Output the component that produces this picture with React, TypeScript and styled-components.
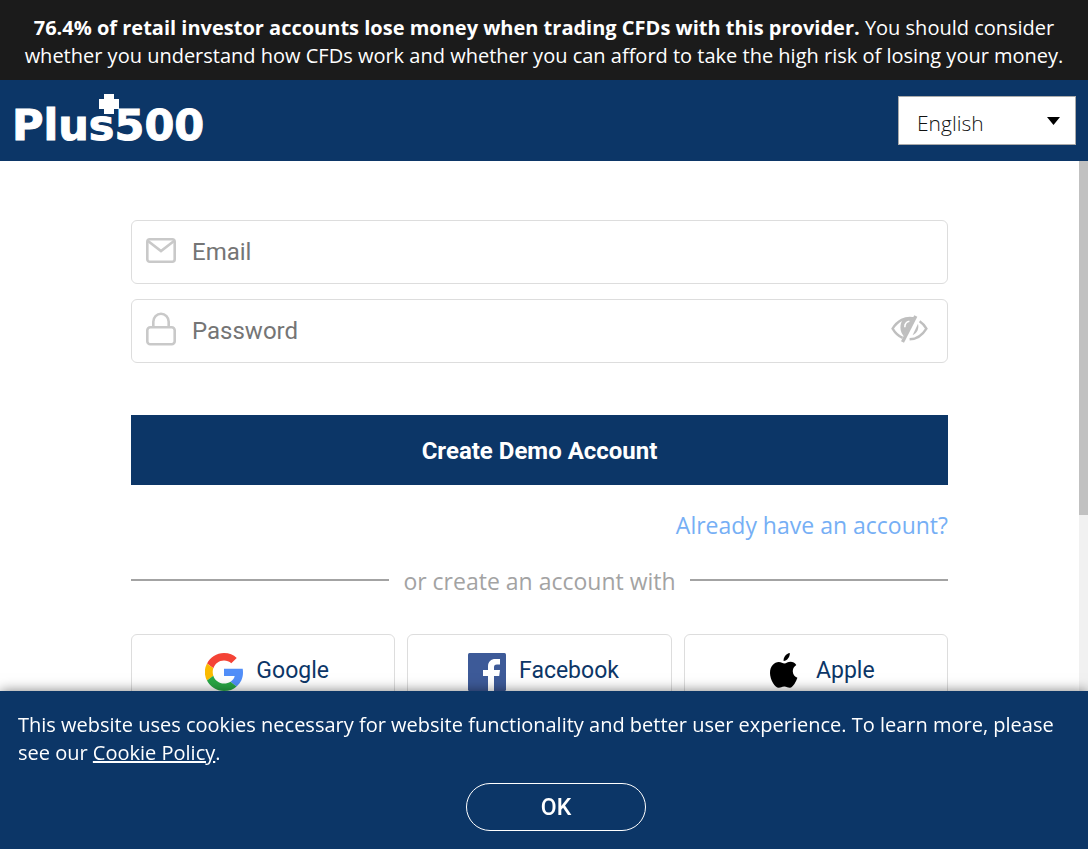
import React, { useState } from 'react';
import styled, { createGlobalStyle } from 'styled-components';

const navy = '#0c3667';
const humanist = '"Segoe UI", "Open Sans", "Noto Sans", sans-serif';
const grotesque = 'Roboto, "Liberation Sans", sans-serif';

const GlobalStyle = createGlobalStyle`
  *, *::before, *::after { box-sizing: border-box; }
  body { margin: 0; background: #fff; font-family: ${humanist}; }
  button, input, select { font: inherit; margin: 0; }
`;

const Page = styled.div`
  display: flex;
  flex-direction: column;
  height: 100vh;
  overflow: hidden;
`;

const RiskNotice = styled.p`
  margin: 0;
  padding: 14px 16px 10px;
  background: #1b1b1b;
  color: #fff;
  font-size: 20px;
  line-height: 28px;
  text-align: center;
`;

const Header = styled.header`
  display: flex;
  align-items: center;
  justify-content: space-between;
  flex: none;
  height: 81px;
  padding: 0 12px;
  background: ${navy};
`;

const Logo = styled.a`
  position: relative;
  padding-top: 8px;
  color: #fff;
  font: bold 43px/48px "DejaVu Sans", sans-serif;
  -webkit-text-stroke: 1px #fff;
  text-decoration: none;
`;

const LogoCross = styled.svg`
  position: absolute;
  left: 87px;
  top: 1px;
`;

const LanguageBox = styled.div`
  display: grid;
  align-items: center;
  width: 178px;
  height: 49px;

  > * { grid-area: 1 / 1; }
`;

const LanguageSelect = styled.select`
  width: 100%;
  height: 100%;
  padding: 4px 40px 0 18px;
  border: 1px solid #aaa;
  border-radius: 0;
  background: #fff;
  color: #111;
  font-family: ${humanist};
  font-size: 21px;
  font-weight: 300;
  appearance: none;
`;

const Caret = styled.svg`
  justify-self: end;
  margin-right: 16px;
  pointer-events: none;
`;

const Body = styled.div`
  display: flex;
  flex: 1;
  min-height: 0;
`;

const Content = styled.main`
  flex: 1;
  overflow-y: auto;
  scrollbar-width: none;
  padding: 59px 131px 180px;
`;

const ScrollTrack = styled.div`
  flex: none;
  width: 9px;
  background: #f1f1f1;
`;

const ScrollThumb = styled.div`
  height: 51.5%;
  background: #c1c1c1;
`;

const Form = styled.form`
  display: flex;
  flex-direction: column;
`;

const Field = styled.label`
  display: flex;
  align-items: center;
  height: 64px;
  margin-bottom: 15px;
  padding: 0 19px 0 14px;
  border: 1px solid #ddd;
  border-radius: 6px;
`;

const FieldIcon = styled.svg`
  flex: none;
  width: 30px;
  height: 40px;
  margin-bottom: 4px;
`;

const Input = styled.input`
  flex: 1;
  min-width: 0;
  height: 60px;
  padding: 0 16px;
  border: 0;
  outline: 0;
  background: none;
  color: #333;
  font-family: ${grotesque};
  font-size: 24px;

  &::placeholder { color: #757575; opacity: 1; }
`;

const RevealButton = styled.button`
  display: flex;
  padding: 0;
  margin-bottom: 5px;
  border: 0;
  background: none;
`;

const SubmitButton = styled.button`
  height: 70px;
  margin-top: 37px;
  padding: 2px 16px 0;
  border: 0;
  background: ${navy};
  color: #fff;
  font-family: ${grotesque};
  font-size: 24px;
  font-weight: 700;
`;

const LoginLink = styled.a`
  align-self: flex-end;
  margin-top: 24px;
  color: #76aff5;
  font-size: 23px;
  line-height: 32px;
  text-decoration: none;
`;

const Divider = styled.div`
  display: flex;
  align-items: center;
  gap: 14px;
  margin: 24px 0 37px;
  color: #a3a3a3;
  font-size: 23px;
  line-height: 32px;

  &::before, &::after {
    content: "";
    flex: 1;
    height: 2px;
    margin-bottom: 2px;
    background: #a3a3a3;
  }
`;

const SocialRow = styled.div`
  display: grid;
  grid-template-columns: repeat(3, 1fr);
  gap: 12px;
`;

const SocialButton = styled.button`
  display: flex;
  align-items: center;
  justify-content: center;
  gap: 13px;
  height: 76px;
  padding: 0 0 4px 8px;
  border: 1px solid #ddd;
  border-radius: 6px;
  background: #fff;
  color: ${navy};
  font-family: ${grotesque};
  font-size: 23px;

  svg { margin-top: 4px; }
`;

const CookieBar = styled.section`
  position: fixed;
  left: 0;
  right: 0;
  bottom: 0;
  display: flex;
  flex-direction: column;
  gap: 16px;
  padding: 20px 18px 18px;
  background: ${navy};
  color: #fff;
  box-shadow: 0 0 12px rgba(0, 0, 0, 0.5);
`;

const CookieText = styled.p`
  margin: 0;
  font-size: 20px;
  line-height: 28px;

  a { color: inherit; }
`;

const CookieActions = styled.div`
  display: flex;
  justify-content: center;
  padding-left: 24px;
`;

const OkButton = styled.button`
  width: 180px;
  height: 48px;
  border: 1px solid #fff;
  border-radius: 24px;
  background: none;
  color: #fff;
  font-family: ${grotesque};
  font-size: 23px;
  font-weight: 500;
`;

const GoogleIcon = () => (
  <svg width="38" height="38" viewBox="0 0 48 48" aria-hidden="true">
    <path fill="#f44336" d="M24 9.5c3.5 0 6.7 1.2 9.2 3.6l6.9-6.9C35.9 2.4 30.5 0 24 0 14.6 0 6.5 5.4 2.6 13.2l8 6.2C12.4 13.7 17.7 9.5 24 9.5z" />
    <path fill="#518ef8" d="M48 24.6c0-1.600-.1-3.100-.4-4.600H24v9h13.500c-.6 3-2.500 5.500-5.300 7.200l7.700 6C45 38 48 32 48 24.600z" />
    <path fill="#fbbb00" d="M10.5 28.6a14.5 14.5 0 0 1 0-9.2l-8-6.2a24 24 0 0 0 0 21.6z" />
    <path fill="#28a745" d="M24 48c6.5 0 11.9-2.1 15.9-5.8l-7.7-6c-2.2 1.5-4.9 2.3-8.2 2.3-6.3 0-11.6-4.2-13.5-9.9l-8 6.2C6.5 42.6 14.6 48 24 48z" />
  </svg>
);

const FacebookIcon = () => (
  <svg width="38" height="38" viewBox="0 0 38 38" aria-hidden="true">
    <rect width="38" height="38" rx="1.5" fill="#3d5a98" />
    <path fill="#fff" d="M20 38V23h-5v-6h5v-3.5C20 8.500 23 6 27.500 6H32v5.500h-3c-2.400 0-3 1.100-3 2.900V17h6l-.8 6H26v15z" />
  </svg>
);

const AppleIcon = () => (
  <svg width="38" height="38" viewBox="-5 0 38 38" aria-hidden="true">
    <path d="M19.800 0c.3 3.800-2.700 7.800-6.200 8-.4-3.700 2.600-7.400 6.200-8z" />
    <path d="M26.300 11.900c-5.300 3.300-4.300 10.700 1.100 12.900-1.200 3.300-4.200 9.800-7.500 10-2.100.1-3-1.300-5.600-1.300s-3.500 1.300-5.500 1.300C5.200 34.900 0 26.800 0 20 0 13 4.300 9 8.800 9c2.400 0 3.900 1.500 5.700 1.500 1.700 0 3.200-1.700 6.100-1.700 2.200 0 4.300 1.100 5.700 3.100z" />
  </svg>
);

const EyeOffIcon = () => (
  <svg width="37" height="28" viewBox="0 0 37 28" aria-hidden="true" fill="none" stroke="#bfbfbf">
    <path strokeWidth="2.400" d="M24 3.600C14 .8 6 6.500 1.600 13.600c2.600 4.400 5.800 7.500 10 9.300" />
    <path fill="#bfbfbf" stroke="none" d="M12.200 4.200 24 2.200 12.800 21.200C8.500 16.500 8.200 9 12.200 4.200z" />
    <path stroke="#fff" strokeWidth="1.600" d="M13.800 12.200c0-3.300 1.700-5.400 4.600-5.900" />
    <path strokeWidth="3.400" d="M24.800 1 11.500 27" />
    <path strokeWidth="2.400" d="M28.600 6.200c2.900 1.900 5.100 4.400 6.800 7.400-4 6.600-9.600 10.500-16.800 10.700" />
    <path fill="#bfbfbf" stroke="none" d="M27 8.800c1.200 5-.9 9.600-5.400 11.400z" />
  </svg>
);

export default function App() {
  const [cookiesAccepted, setCookiesAccepted] = useState(false);
  const [passwordShown, setPasswordShown] = useState(false);

  return (
    <Page>
      <GlobalStyle />
      <RiskNotice>
        <strong>76.4% of retail investor accounts lose money when trading CFDs with this provider.</strong>{' '}
        You should consider whether you understand how CFDs work and whether you can afford to take the
        high risk of losing your money.
      </RiskNotice>
      <Header>
        <Logo href="#">
          Plus500
          <LogoCross width="20" height="20" viewBox="0 0 20 20" aria-hidden="true">
            <path fill="#fff" d="M5 0h10v5h5v10h-5v5H5v-5H0V5h5z" />
          </LogoCross>
        </Logo>
        <LanguageBox>
          <LanguageSelect aria-label="Language" defaultValue="English">
            <option>English</option>
          </LanguageSelect>
          <Caret width="13" height="8" viewBox="0 0 13 8" aria-hidden="true">
            <path d="M0 0h13L6.500 8z" />
          </Caret>
        </LanguageBox>
      </Header>
      <Body>
        <Content>
          <Form onSubmit={(e) => e.preventDefault()}>
            <Field>
              <FieldIcon viewBox="0 0 30 40" fill="none" stroke="#c9c9c9" strokeWidth="2.600" aria-hidden="true">
                <rect x="1.300" y="9.300" width="27.400" height="22.400" rx="2.500" />
                <path d="M2 11l13 10L28 11" />
              </FieldIcon>
              <Input type="email" placeholder="Email" aria-label="Email" />
            </Field>
            <Field>
              <FieldIcon viewBox="0 0 30 40" fill="none" stroke="#c9c9c9" strokeWidth="2.600" aria-hidden="true">
                <rect x="1.300" y="18.300" width="27.400" height="17" rx="3" />
                <path d="M7.300 18.300v-5.500a7.700 8 0 0 1 15.400 0v5.500" />
              </FieldIcon>
              <Input type={passwordShown ? 'text' : 'password'} placeholder="Password" aria-label="Password" />
              <RevealButton type="button" aria-label="Show password" onClick={() => setPasswordShown(!passwordShown)}>
                <EyeOffIcon />
              </RevealButton>
            </Field>
            <SubmitButton type="submit">Create Demo Account</SubmitButton>
            <LoginLink href="#login">Already have an account?</LoginLink>
          </Form>
          <Divider>or create an account with</Divider>
          <SocialRow>
            <SocialButton type="button"><GoogleIcon />Google</SocialButton>
            <SocialButton type="button"><FacebookIcon />Facebook</SocialButton>
            <SocialButton type="button"><AppleIcon />Apple</SocialButton>
          </SocialRow>
        </Content>
        <ScrollTrack><ScrollThumb /></ScrollTrack>
      </Body>
      {!cookiesAccepted && (
        <CookieBar aria-label="Cookies">
          <CookieText>
            This website uses cookies necessary for website functionality and better user experience. To learn
            more, please see our <a href="#cookies">Cookie Policy</a>.
          </CookieText>
          <CookieActions>
            <OkButton type="button" onClick={() => setCookiesAccepted(true)}>OK</OkButton>
          </CookieActions>
        </CookieBar>
      )}
    </Page>
  );
}
